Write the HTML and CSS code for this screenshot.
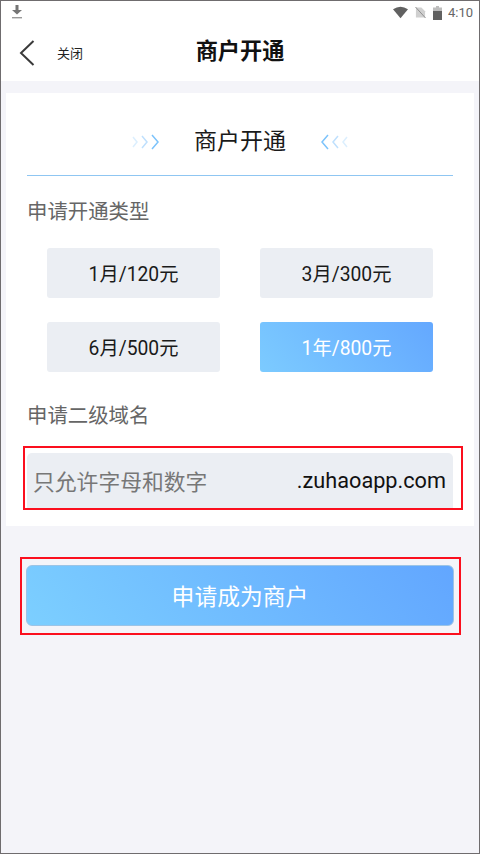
FILE: index.html
```html
<!DOCTYPE html>
<html lang="zh">
<head>
<meta charset="utf-8">
<title>商户开通</title>
<link rel="stylesheet" href="styles.css">
</head>
<body>
<div class="frame">
  <div class="status">
    <svg class="dl" width="12" height="14" viewBox="0 0 12 14"><path d="M4.500 0h3v5H11L6 9.500 1 5h3.500z" fill="#757575"/><rect x="1" y="12" width="10" height="1.400" fill="#9a9a9a"/></svg>
    <span class="status-right">
      <svg width="15" height="13" viewBox="0 0 16 13"><path d="M0 3Q8-2.500 16 3L8 12.500z" fill="#616161"/></svg>
      <svg width="11" height="13" viewBox="0 0 12 13"><path d="M1 1h6l4 4v7H1z" fill="#d0d0d0"/><path d="M0.500 0.500L11.500 12.500" stroke="#8a8a8a" stroke-width="1"/></svg>
      <svg width="9" height="14" viewBox="0 0 9 14"><path d="M3 0h3v1.500h3V14H0V1.500h3z" fill="#bdbdbd"/><rect y="5" width="9" height="9" fill="#616161"/></svg>
      <span class="clock">4:10</span>
    </span>
  </div>
  <header class="appbar">
    <svg class="back" width="16" height="26" viewBox="0 0 16 26"><path d="M14.500 1L2 13l12.500 12" fill="none" stroke="#3a3a3a" stroke-width="2"/></svg>
    <span class="close">关闭</span>
    <h1 class="apptitle">商户开通</h1>
  </header>
  <main class="card">
    <div class="card-head">
      <svg width="28" height="18" viewBox="0 0 28 18" fill="none" stroke-width="1.500"><path d="M1 4l4 5-4 5" stroke="#dceffe"/><path d="M10 3l5 6-5 6" stroke="#bfe0fd"/><path d="M20 2l6 7-6 7" stroke="#7cc3fb"/></svg>
      <h2 class="card-title">商户开通</h2>
      <svg width="28" height="18" viewBox="0 0 28 18" fill="none" stroke-width="1.500"><path d="M8 2L2 9l6 7" stroke="#7cc3fb"/><path d="M18 3l-5 6 5 6" stroke="#bfe0fd"/><path d="M27 4l-4 5 4 5" stroke="#dceffe"/></svg>
    </div>
    <h3 class="label first">申请开通类型</h3>
    <div class="plans">
      <div class="plan">1月/120元</div>
      <div class="plan">3月/300元</div>
      <div class="plan">6月/500元</div>
      <div class="plan active">1年/800元</div>
    </div>
    <h3 class="label second">申请二级域名</h3>
    <div class="mark field-mark">
      <div class="field"><span class="hint">只允许字母和数字</span><span class="domain">.zuhaoapp.com</span></div>
    </div>
  </main>
  <div class="mark submit-mark">
    <button class="submit">申请成为商户</button>
  </div>
</div>
</body>
</html>
```
FILE: styles.css
```css
* { box-sizing: border-box; margin: 0; padding: 0; }
html, body { width: 480px; height: 854px; overflow: hidden; }
body { font-family: Roboto, "Noto Sans CJK SC", sans-serif; background: #f4f4f9; }
.frame { height: 854px; border: 1px solid #6f6c6e; }
.status { height: 23px; background: #fff; display: flex; justify-content: space-between; align-items: center; padding: 0 6px 0 10px; }
.dl { margin-top: -1px; }
.status-right { display: flex; align-items: center; gap: 7px; }
.clock { font-size: 13px; color: #666; margin-left: -1px; }
.appbar { height: 57px; background: #fff; display: flex; align-items: center; position: relative; padding-left: 18px; }
.close { font-size: 13px; color: #222; margin-left: 22px; }
.apptitle { position: absolute; left: 0; right: 0; top: 13px; text-align: center; font-size: 22.200px; line-height: 29px; font-weight: 700; color: #111; pointer-events: none; }
.card { margin: 12px 5px 0; height: 433px; background: #fff; padding: 0 21px 0 17px; }
.card-head { height: 83px; margin: 0 0 0 4px; border-bottom: 1px solid #8fc6f2; display: flex; align-items: center; justify-content: center; gap: 34px; padding-top: 15px; }
.card-title { font-size: 23px; line-height: 30px; font-weight: 400; color: #1a1a1a; white-space: nowrap; }
.label { font-size: 20.400px; line-height: 28px; font-weight: 400; color: #666; margin-left: 4px; }
.first { margin-top: 22px; }
.plans { display: grid; grid-template-columns: 173px 173px; column-gap: 40px; row-gap: 24.500px; margin: 22px 0 0 24px; }
.plan { height: 49.500px; background: #ebeef3; border-radius: 3px; display: flex; align-items: center; justify-content: center; font-size: 19.300px; color: #1a1a1a; }
.plan.active { background: linear-gradient(50deg, #7ccbff, #64a8ff); color: #fff; }
.second { margin-top: 30px; }
.mark { border: 2px solid #fb0f1e; }
.field-mark { margin: 16px 0 0; padding: 5px 8px 0 2px; height: 64px; width: 440px; }
.field { height: 55px; background: #ebeef3; border-radius: 5px 5px 0 0; display: flex; align-items: center; justify-content: space-between; padding: 0 7px 0 6px; }
.hint { font-size: 21.800px; color: #777; }
.domain { font-size: 21.700px; color: #111; }
.submit-mark { margin: 31px 0 0 19px; width: 441px; height: 78px; padding: 6px 5px 7px 4px; }
.submit { display: block; width: 100%; height: 100%; border: 1px solid #9cc4e6; border-radius: 6px; background: linear-gradient(50deg, #7ccfff, #62a6ff); color: #fff; font: 400 22.800px Roboto, "Noto Sans CJK SC", sans-serif; }
```
